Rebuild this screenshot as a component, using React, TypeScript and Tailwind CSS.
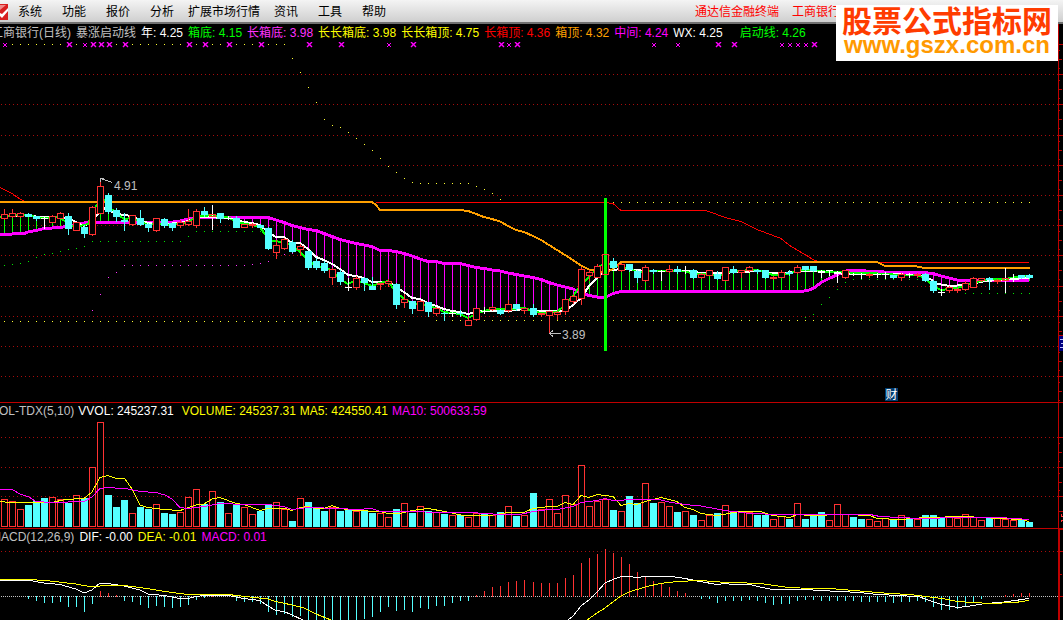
import React from 'react';

type Pt = [number, number];
type Candle = [string, number, number, number, number];

const PLOT_W = 1058;

// Bars sit eight pixels apart.
const barX = (i: number) => (i < 66 ? 4 : 5) + 8 * i;

const RED = '#ff3232';
const CYAN = '#54ffff';
const MAGENTA = '#ff00ff';

// kind, high, body top, body bottom, low
const candles: Candle[] = [
  ['r', 209, 214, 218, 219], ['r', 209, 213, 216, 217], ['r', 212, 213, 216, 217], ['c', 213, 214, 216, 216],
  ['c', 216, 216, 218, 220], ['w', 217, 218, 218, 228], ['r', 215, 216, 222, 222], ['r', 212, 213, 218, 218],
  ['c', 213, 216, 228, 234], ['r', 222, 222, 230, 230], ['c', 225, 227, 233, 237], ['r', 206, 207, 234, 235],
  ['r', 180, 186, 213, 213], ['c', 193, 195, 211, 213], ['c', 208, 210, 216, 221], ['c', 213, 220, 221, 230],
  ['r', 215, 215, 224, 225], ['c', 210, 218, 224, 225], ['c', 223, 224, 227, 231], ['r', 218, 218, 230, 231],
  ['c', 218, 219, 225, 227], ['c', 223, 223, 227, 230], ['r', 220, 222, 225, 227], ['r', 209, 221, 224, 225],
  ['r', 209, 211, 225, 227], ['c', 207, 211, 214, 216], ['x', 205, 214, 216, 229], ['c', 213, 213, 218, 222],
  ['w', 216, 218, 218, 219], ['c', 216, 218, 227, 227], ['r', 224, 224, 227, 227], ['r', 223, 224, 225, 227],
  ['c', 224, 225, 227, 227],
  ['c', 227, 228, 248, 249], ['r', 240, 245, 252, 258], ['r', 238, 239, 248, 249], ['c', 240, 242, 251, 252],
  ['r', 244, 246, 249, 255], ['c', 251, 251, 267, 269], ['c', 258, 261, 267, 269], ['c', 261, 263, 270, 272],
  ['r', 268, 269, 277, 284], ['c', 270, 272, 281, 284], ['w', 278, 287, 287, 290], ['r', 276, 278, 287, 289],
  ['c', 277, 278, 282, 290], ['c', 277, 286, 289, 289], ['r', 283, 283, 284, 289], ['r', 279, 281, 283, 286],
  ['c', 283, 284, 304, 308], ['r', 294, 299, 302, 307], ['c', 301, 301, 308, 313], ['r', 300, 301, 310, 310],
  ['c', 302, 302, 311, 316], ['r', 307, 308, 313, 315], ['c', 312, 313, 313, 320], ['w', 310, 313, 313, 316],
  ['c', 310, 313, 313, 316], ['r', 317, 320, 325, 325], ['r', 308, 308, 319, 320], ['w', 307, 311, 311, 313],
  ['r', 306, 307, 309, 310], ['c', 309, 310, 313, 314], ['r', 300, 304, 310, 312], ['c', 304, 304, 308, 310],
  ['r', 308, 308, 310, 313],
  ['c', 304, 308, 314, 316], ['r', 313, 313, 314, 316], ['r', 311, 311, 315, 333], ['r', 311, 312, 314, 319],
  ['r', 299, 299, 311, 314], ['r', 294, 296, 301, 303], ['r', 267, 269, 298, 304], ['r', 270, 272, 275, 280],
  ['r', 264, 266, 277, 277], ['r', 253, 254, 274, 275], ['c', 258, 261, 267, 268], ['r', 263, 264, 270, 271],
  ['c', 264, 264, 269, 271], ['c', 270, 271, 277, 282], ['r', 265, 267, 280, 281], ['c', 269, 270, 271, 273],
  ['w', 270, 271, 271, 280], ['r', 265, 269, 271, 272], ['c', 266, 269, 271, 273], ['w', 266, 270, 270, 273],
  ['c', 269, 270, 277, 278], ['r', 273, 274, 277, 278], ['r', 270, 270, 275, 275], ['c', 271, 274, 278, 279],
  ['r', 267, 267, 280, 280], ['c', 266, 269, 272, 273], ['r', 270, 270, 272, 277], ['r', 266, 267, 270, 271],
  ['c', 269, 270, 271, 273], ['c', 270, 270, 277, 278], ['r', 276, 277, 278, 279],
  ['r', 270, 272, 277, 277], ['c', 270, 272, 273, 275], ['r', 265, 267, 272, 273], ['c', 266, 266, 269, 270],
  ['c', 266, 266, 270, 271], ['w', 270, 271, 271, 277], ['w', 270, 270, 270, 275], ['w', 271, 272, 272, 282],
  ['r', 270, 270, 277, 278], ['w', 273, 274, 274, 275], ['w', 273, 274, 274, 278], ['r', 273, 274, 275, 277],
  ['w', 273, 274, 274, 277], ['w', 272, 274, 274, 278], ['c', 275, 275, 277, 278], ['r', 273, 274, 277, 280],
  ['w', 273, 274, 274, 277], ['r', 273, 274, 275, 277], ['c', 273, 274, 280, 281], ['c', 280, 281, 290, 292],
  ['w', 289, 292, 292, 295], ['r', 286, 287, 290, 292], ['r', 288, 289, 290, 292], ['r', 281, 283, 289, 290],
  ['r', 277, 278, 287, 287], ['r', 278, 278, 280, 281], ['c', 277, 278, 279, 289], ['r', 279, 280, 281, 283],
  ['x', 268, 278, 280, 292], ['w', 274, 278, 278, 281], ['c', 275, 275, 277, 278], ['c', 274, 275, 277, 278],
];

const volumes =
  'r499 r501 r509 c505 c501 c498 r497 r499 c503 r495 c498 r467 r422 c495 c507 c500 r513 c507 c509 r504 c513 c514 r512 r497 r489 c504 r491 c502 r513 c505 r507 r514 c511 c504 r502 r509 c521 r498 c502 c508 c511 r507 c511 c509 r511 c510 c513 r513 r517 c509 r503 c513 r506 c511 r512 c514 r515 c515 r517 r513 c514 r515 c512 r506 c516 r515 c493 r509 r499 r513 r495 r504 r465 r506 r501 r499 c510 r511 c496 c503 r483 c503 r502 r506 c512 r511 c515 r520 r515 c513 r505 c511 r512 r512 c515 c515 r519 r516 c519 r503 c519 c515 c512 r520 r504 r514 c517 c519 r519 r521 r518 c519 r515 c519 r519 c515 c515 c518 r516 r518 r514 r517 r520 c518 r518 r519 r520 c519 c522'.split(' ');

// End of each histogram bar; 596 is the zero line.
const macdBars = [
  596, 596, 596, 598, 600, 602, 602, 601, 606, 606, 611, 603, 591, 593, 595, 600, 601, 604, 607, 605, 606, 607, 606, 604, 599, 597, 595,
  596, 596, 600, 601, 601, 603, 611, 614, 613, 616, 615, 620, 620, 620, 620, 620, 620, 620, 618, 616, 611, 606, 610, 609, 611, 607, 608,
  605, 605, 602, 600, 600, 595, 591, 587, 586, 582, 581, 580, 582, 583, 583, 583, 578, 575, 563, 558, 554, 549, 553, 557, 564, 572, 576,
  581, 584, 587, 591, 593, 596, 598, 598, 602, 600, 600, 600, 599, 600, 602, 604, 603, 603, 600, 599, 599, 600, 600, 600, 600, 600, 601,
  601, 601, 601, 602, 601, 601, 600, 601, 606, 609, 609, 608, 605, 601, 598, 596, 596, 595, 594, 593, 593,
];

const parse = (s: string): Pt[] => s.split(' ').map((p) => p.split(',').map(Number) as Pt);

const boxTop = '0,202 372,202 376,205 380,210 460,210 468,211 476,214 484,217 492,219 500,221.5 508,226 516,230 524,232 533,236 541,240 549,245 557,250 565,255 573,260 581,265.5 589,269.5 597,271 605,273 613,269 621,262 877,262 885,266 914,266 925,268 1030,268';
const longTopA = '0,187.5 4,189.5 12,193.5 20,199 25,201.5';
const longTopB = '376,202.5 605,202.5 613,203.5 621,210.5 706,210.5 717,214.5 725,217.5 733,219.5 741,221.5 749,225.5 757,229.5 765,232.5 773,235.5 781,238.5 789,245 797,250 805,254.5 813,259.5 818,261.5';
const longBottom = '0,234.5 12,234 24,233.5 28,232 36,230.5 44,228.5 60,227.5 76,225 84,223 93,222.5 170,222.5 180,221 188,219 197,217.5 268,217.5 276,220 284,222.5 292,225.5 300,227.5 308,229.5 316,230.5 324,233.5 332,236.5 340,239.5 348,241.5 356,243.5 364,245 372,246.5 380,250.5 388,250.5 396,251.5 404,253.5 412,256 420,259 428,261.5 436,261.5 444,263.5 460,263.5 468,265.5 476,267.5 484,268.5 492,270 500,271 508,273 516,274.5 524,276 533,277.5 541,279.5 549,282.5 557,285 565,287 573,289 581,293 589,295.5 597,297 605,297.5 613,293.5 621,291.5 800,291.5 808,290.5 814,288 822,282 830,278 838,274.5 846,271 854,270.5 878,271.5 890,272.5 922,272.5 933,273.5 941,276 949,278 957,280 973,280.5 1029,280.5';
const wx = '0,217 12,216 28,215 36,216.5 44,217.5 60,217 68,218 76,222 84,226 92,221 100,212 105,208 110,211 116,213.5 124,215 132,216 140,220 148,223 156,224 164,224 180,223 188,221 196,218 204,217 228,218 236,220 244,222 252,223 260,225 268,232 276,237 284,237 292,243 300,243 308,249 316,257 324,260 332,264 340,269 348,275 356,276 364,278 372,282 390,282 396,287 404,292 412,298 420,299 428,303 436,306 444,309 452,311 460,312 468,314 476,312 484,311 508,311 524,309 533,310 541,311 565,311 573,305 581,298 589,286 597,278 605,271 613,270 621,269 637,270 645,271 690,271 700,273 720,273 740,272 760,271 770,273 785,273 797,271 805,271 830,272 845,274 885,274 920,275 930,279 938,284 950,286 965,285 975,283 985,281 1000,280 1010,279 1029,278';
const trend = '0,217 12,215 28,215 40,218 60,217 68,224 76,227 88,224 96,206 104,200 108,206 116,213 124,219 132,218 140,221 148,225 156,224 172,225 188,222 196,217 212,215 228,217 236,222 252,225 260,227 264,233 272,241 284,242 292,246 300,252 308,260 316,266 324,268 332,270 340,279 348,284 356,280 364,283 372,286 380,283 388,281 396,292 404,299 412,303 420,304 436,308 444,312 460,314 468,318 476,314 484,311 492,309 508,309 524,308 533,311 541,313 557,312 565,305 573,296 581,285 589,277 597,268 605,263 613,264 621,267 629,268 637,272 653,271 685,271 693,274 709,274 717,276 733,271 757,270 773,275 789,274 797,270 813,270 829,272 870,273 901,275 917,275 925,278 933,286 941,290 957,288 973,283 989,279 1005,279 1017,277 1029,276';

const ma5 = '0,501 8,502.5 50,503 65,499.5 84,498.5 92,492 100,477.5 108,475.5 116,478.5 125,479 132,489 140,505 148,507.5 164,509.5 180,510.5 196,505 204,504 212,499 220,497.5 236,503.5 244,504.5 260,510.5 268,508.5 285,508.5 292,510.5 300,507.5 308,506.5 316,508.5 324,508.5 332,505.5 340,508.5 356,510.5 380,511.5 388,513.5 400,513.5 412,510.5 428,508.5 445,511.5 463,515.5 490,515.5 508,512.5 524,512.5 533,508.5 549,506.5 557,506.5 565,502.5 573,504.5 581,495.5 589,497.5 597,494.5 613,496.5 621,505.5 629,503.5 637,504.5 645,501.5 661,497.5 677,501.5 685,507.5 693,509.5 701,513.5 717,515.5 740,511.5 760,511.5 773,515.5 790,517.5 797,514.5 810,515.5 845,514.5 870,515.5 877,518.5 900,519.5 925,517.5 965,516.5 1000,518.5 1022,519.5 1029,521.5';
const ma10 = '0,489.5 12,489.5 20,494 28,496.5 36,501.5 52,502.5 84,501.5 92,497 100,488.5 108,487.5 128,489 140,491.5 156,492.5 165,495 172,499 180,507.5 188,508.5 204,506.5 220,503.5 245,504.5 268,504.5 284,506.5 292,509.5 308,507.5 340,508.5 356,509.5 372,508.5 380,511.5 470,512.5 500,514.5 520,514.5 533,511.5 549,509.5 557,509.5 573,506.5 581,502.5 597,500.5 605,498.5 613,500.5 645,499 661,500 669,502 685,504.5 701,506 725,510.5 750,513.5 780,514.5 870,514.5 880,516.5 920,518.5 960,517.5 1000,517.5 1029,519.5';

const dif = ['0,580 30,580.5 44,583 60,584.5 76,589 84,593 92,590 100,583 108,583.5 124,586 140,590 148,594 164,595.5 180,598.5 188,598.5 196,596.5 204,595.5 228,595.5 244,598.5 260,600.5 268,606 276,610.5 284,611.5 292,615 303,620', '568,620 573,616 581,606 589,600 597,592 605,583 613,579.5 621,576.5 629,576.5 637,577.5 645,576.5 672,576.5 685,578.5 700,581.5 717,584.5 725,583.5 733,584.5 750,584.5 760,587 773,589.5 805,589.5 820,590.5 860,592.5 877,594.5 900,595.5 920,597 925,599 940,604 950,606 958,607.5 970,606 985,603.5 1000,602.5 1015,600.5 1029,598.5'];
const dea = ['0,579.5 30,579.5 50,581 76,584 92,587 100,586 124,585.5 140,587.5 156,590 172,592.5 188,594.5 204,595 228,594.5 250,597 268,599 276,601.5 292,605 304,608 316,614 331,620', '587,620 597,613 605,608 613,602 621,596 629,592 645,587 660,583.5 677,581.5 700,580.5 720,582 760,583.5 785,587 800,588 830,588.5 860,591 890,593.5 910,594.5 930,597 945,599 957,601.5 973,602.5 990,603.5 1015,602.5 1029,600.5'];

const range = (from: number, to: number, y: number): Pt[] => {
  const out: Pt[] = [];
  for (let i = 0; i < 129; i++) if (barX(i) >= from && barX(i) <= to) out.push([barX(i), y]);
  return out;
};

const yellowDots: Pt[] = [
  ...range(12, 284, 44), ...range(0, 404, 321), ...range(436, 1030, 320), ...range(613, 1030, 202), ...range(420, 468, 183),
  ...parse('292,58 300,72 308,87 316,102 324,119 332,125 340,127 348,132 356,138 364,144 372,150 380,158 388,166 396,172 404,178 412,182 476,186 484,189 492,193 500,199'),
];
const greenDots: Pt[] = [
  ...parse('4,265 12,264 20,263 28,261 36,257 44,254 52,253 60,251 68,249 76,248 84,246 188,236 805,317 813,314 821,304 829,297 837,289 845,282'),
  ...range(92, 180, 241), ...range(196, 260, 231), ...range(853, 917, 279), ...range(965, 1030, 293),
];
const pinkDots: Pt[] = [
  ...parse('92,310 100,294 108,277 116,272 252,264 260,263 268,261 284,254 292,253'), ...range(124, 244, 265),
];

const bigCrosses = [69, 93, 101, 109, 125, 189, 205, 229, 261, 309, 341, 413, 501, 517, 718, 734, 814];
const smallCrosses = [5, 85, 389, 509, 654, 678, 782, 790, 798, 806];

const yAt = (line: Pt[], x: number) => {
  const k = Math.max(1, line.findIndex((p) => p[0] >= x));
  const [x0, y0] = line[k - 1];
  const [x1, y1] = line[k];
  return y0 + ((y1 - y0) * (x - x0)) / (x1 - x0);
};

const Grid = ({ rows }: { rows: number[] }) => (
  <>
    {rows.map((y) => (
      <line key={y} x1={1} x2={PLOT_W} y1={y + 0.5} y2={y + 0.5} stroke="#a80c0c" strokeDasharray="1 3" />
    ))}
  </>
);

const Dots = ({ pts, color }: { pts: Pt[]; color: string }) => (
  <path d={pts.map(([x, y]) => `M${x} ${y}h1v1h-1z`).join('')} fill={color} />
);

const Line = ({ pts, color, width = 1 }: { pts: string; color: string; width?: number }) => (
  <polyline points={pts} fill="none" stroke={color} strokeWidth={width} />
);

const Plot = ({ top, height, label, children }: { top: number; height: number; label: string; children: React.ReactNode }) => (
  <svg
    role="img"
    aria-label={label}
    width={PLOT_W}
    height={height}
    viewBox={`0 ${top} ${PLOT_W} ${height}`}
    shapeRendering="crispEdges"
    className="block max-w-none shrink-0"
  >
    {children}
  </svg>
);

const Axis = ({ top, height, long, mid, small = [], children }: { top: number; height: number; long: number[]; mid: number[]; small?: number[]; children?: React.ReactNode }) => (
  <svg aria-hidden="true" width={5} height={height} viewBox={`0 ${top} 5 ${height}`} shapeRendering="crispEdges" className="block shrink-0 bg-black">
    <g fill="#c00000">
      <rect x={0} y={top} width={1} height={height} />
      {long.map((y) => <rect key={y} x={0} y={y} width={5} height={1} />)}
      {mid.map((y) => <rect key={y} x={0} y={y} width={4} height={1} />)}
      {small.map((y) => <rect key={y} x={0} y={y} width={2} height={1} />)}
    </g>
    {children}
  </svg>
);

function CandleShape({ i, c }: { i: number; c: Candle }) {
  const x = barX(i);
  const [kind, high, top, bottom, low] = c;
  const wick = (color: string) => <rect x={x} y={high} width={1} height={low - high + 1} fill={color} />;
  if (kind === 'w') {
    return <>{wick('#fff')}<rect x={x - 3} y={top} width={7} height={1} fill="#fff" /></>;
  }
  if (kind === 'c') {
    return <>{wick(CYAN)}<rect x={x - 3} y={top} width={7} height={bottom - top + 1} fill={CYAN} /></>;
  }
  return (
    <>
      {kind === 'x' ? (
        wick('#fff')
      ) : (
        <>
          <rect x={x} y={high} width={1} height={top - high} fill={RED} />
          <rect x={x} y={bottom} width={1} height={low - bottom + 1} fill={RED} />
        </>
      )}
      <rect x={x - 2.5} y={top + 0.5} width={6} height={Math.max(1, bottom - top)} fill={kind === 'x' ? 'none' : '#000'} stroke={RED} />
    </>
  );
}

function PricePlot() {
  const base = parse(longBottom);
  const green = parse(trend);
  const hatch: React.ReactNode[] = [];
  candles.forEach((_, i) => {
    const x = barX(i);
    const a = yAt(base, x);
    const b = yAt(green, x);
    if (x > 837 && x < 925) return;
    const y = Math.round(Math.min(a, b));
    hatch.push(<rect key={i} x={x} y={y} width={1} height={Math.round(Math.abs(a - b))} fill={b > a ? MAGENTA : '#00ff00'} />);
  });
  return (
    <Plot top={42} height={360} label="K线图">
      <Grid rows={[74, 104, 135, 165, 195, 225, 255, 286, 316, 346, 376]} />
      <Dots pts={yellowDots} color="#ffff32" />
      <Dots pts={greenDots} color="#00e600" />
      <Dots pts={pinkDots} color="#ff32ff" />
      <g stroke={MAGENTA} strokeWidth={1} shapeRendering="auto">
        {bigCrosses.map((x) => <path key={x} d={`M${x - 2} 42l5 5m0-5l-5 5`} strokeWidth={1.4} />)}
        {smallCrosses.map((x) => <path key={x} d={`M${x - 2} 43l4 4m0-4l-4 4`} />)}
      </g>
      {hatch}
      <Line pts={longTopA} color="#f00" />
      <Line pts={longTopB} color="#f00" />
      <Line pts="877,262.5 1029,262.5" color="#f00" />
      <Line pts={longBottom} color={MAGENTA} width={3} />
      <Line pts={wx} color="#fff" width={2} />
      <Line pts={trend} color="#00ff00" width={2} />
      <Line pts={boxTop} color="#ffa000" width={2} />
      {candles.map((c, i) => <CandleShape key={i} i={i} c={c} />)}
      <rect x={604} y={198} width={3} height={153} fill="#00ff00" />
      <rect x={602.5} y={254.5} width={6} height={20} fill="none" stroke={RED} />
      <g stroke="#c0c0c0" fill="none">
        <path d="M100.5 182v-3.5h3M101 178.5l11 4" />
        <path d="M550 333.500h11M553 330.500l-3.500 3l3.500 3" />
      </g>
      <g fill="#c0c0c0" fontSize={12} className="font-['Liberation_Sans',sans-serif]">
        <text x={114} y={190}>4.91</text>
        <text x={562} y={339}>3.89</text>
      </g>
    </Plot>
  );
}

function VolumePlot() {
  return (
    <Plot top={419} height={109} label="成交量">
      <Grid rows={[437, 467, 496]} />
      {volumes.map((v, i) => {
        const top = Number(v.slice(1));
        return v[0] === 'c' ? (
          <rect key={i} x={barX(i) - 3} y={top} width={7} height={527 - top} fill={CYAN} />
        ) : (
          <rect key={i} x={barX(i) - 2.5} y={top + 0.5} width={6} height={526 - top} fill="#000" stroke={RED} />
        );
      })}
      <Line pts={ma5} color="#ffff00" />
      <Line pts={ma10} color={MAGENTA} />
    </Plot>
  );
}

function MacdPlot() {
  return (
    <Plot top={545} height={75} label="MACD">
      <Grid rows={[551]} />
      <line x1={1} x2={PLOT_W} y1={596.5} y2={596.5} stroke="#c0c0c0" strokeDasharray="1 1" />
      {macdBars.map((v, i) =>
        v === 596 ? null : (
          <rect key={i} x={barX(i)} y={Math.min(v, 596)} width={1} height={Math.abs(v - 596) + 1} fill={v > 596 ? CYAN : RED} />
        ),
      )}
      {dif.map((p) => <Line key={p} pts={p} color="#fff" />)}
      {dea.map((p) => <Line key={p} pts={p} color="#ffff00" />)}
    </Plot>
  );
}

const menu = [
  ['系统', 'w-11'], ['功能', 'w-11'], ['报价', 'w-11'], ['分析', 'w-11'],
  ['扩展市场行情', 'w-20'], ['资讯', 'w-11'], ['工具', 'w-11'], ['帮助', 'w-11'],
];

const priceLegend = [
  ['工商银行(日线)', 'text-[#c0c0c0]'],
  ['暴涨启动线', 'text-[#c0c0c0]'],
  ['年: 4.25', 'text-white'],
  ['箱底: 4.15', 'text-[#00ff00]'],
  ['长箱底: 3.98', 'text-[#ff32ff]'],
  ['长长箱底: 3.98', 'text-[#ffff00]'],
  ['长长箱顶: 4.75', 'text-[#ffff00]'],
  ['长箱顶: 4.36', 'text-[#ff0000]'],
  ['箱顶: 4.32', 'text-[#ffa000]'],
  ['中间: 4.24', 'text-[#ff00ff]'],
  ['WX: 4.25', 'text-white'],
  ['启动线: 4.26', 'text-[#00ff00] ml-3'],
];
const volumeLegend = [
  ['VOL-TDX(5,10)', 'text-[#c0c0c0]'],
  ['VVOL: 245237.31', 'text-white'],
  ['VOLUME: 245237.31', 'text-[#ffff00] ml-1'],
  ['MA5: 424550.41', 'text-[#ffff00]'],
  ['MA10: 500633.59', 'text-[#ff00ff]'],
];
const macdLegend = [
  ['MACD(12,26,9)', 'text-[#c0c0c0]'],
  ['DIF: -0.00', 'text-white'],
  ['DEA: -0.01', 'text-[#ffff00]'],
  ['MACD: 0.01', 'text-[#ff00ff]'],
];

const Legend = ({ items, className }: { items: string[][]; className: string }) => (
  <div className={`flex items-center ${className}`}>
    {items.map(([text, cls]) => <span key={text} className={cls}>{text}</span>)}
  </div>
);

const ticks = [44, 74, 104, 135, 165, 195, 225, 255, 286, 316, 346, 376];

export default function App() {
  return (
    <div className="relative flex min-h-screen flex-col overflow-hidden whitespace-nowrap bg-black font-['Liberation_Sans','Noto_Sans_CJK_SC',sans-serif] text-[12px] leading-4">
      <header className="flex h-6 items-center border-b-2 border-[#707070] bg-linear-to-b from-[#f4f4f4] to-[#cfcfcf] pt-px text-black">
        <svg aria-hidden="true" width="8" height="16" viewBox="0 0 8 16" className="block shrink-0">
          <path d="M0 0h8v16H0z" fill="#d81e1e" />
          <path d="M0 1h6L0 6z" fill="#f08a8a" />
          <path d="M0 9l2 1 6-6v3l-6 7-2-2z" fill="#fff" />
        </svg>
        <nav className="flex">
          {menu.map(([name, width]) => (
            <button key={name} type="button" className={`${width} text-center`}>{name}</button>
          ))}
        </nav>
        <div className="mr-[223px] ml-auto flex gap-[13px] text-[#ff0000]">
          <span>通达信金融终端</span>
          <span>工商银行</span>
        </div>
      </header>

      <main className="flex flex-1 flex-col">
        <section className="flex border-b border-[#c00000]">
          <div className="relative min-w-0 flex-1 overflow-hidden">
            <Legend items={priceLegend} className="-ml-[9px] h-[18px] gap-[5px]" />
            <PricePlot />
            <span className="absolute bottom-px left-[885px] flex size-[13px] items-center justify-center bg-[#003c70] text-white">财</span>
          </div>
          <Axis top={24} height={378} long={ticks} mid={ticks.map((y) => y + 15)} small={ticks.flatMap((y) => [y + 6, y + 24])}>
            <rect x={1} y={335} width={4} height={16} fill="#000080" />
            <rect x={1} y={335} width={4} height={1} fill="#c00000" />
            <path d="M2 339.500h3M5 343.500h-2M2 347.500h3" stroke="#c0c0ff" fill="none" />
          </Axis>
        </section>

        <section className="flex border-b border-[#c00000]">
          <div className="min-w-0 flex-1 overflow-hidden">
            <Legend items={volumeLegend} className="-ml-[9px] h-4 gap-1" />
            <VolumePlot />
          </div>
          <Axis top={403} height={125} long={[437, 467, 496, 511]} mid={[452, 482]} small={[443, 461, 473, 490]}>
            <path d="M3 514v2h2M3 522v-2h2" stroke="#ff3232" fill="none" />
          </Axis>
        </section>

        <section className="flex flex-1">
          <div className="min-w-0 flex-1 overflow-hidden">
            <Legend items={macdLegend} className="-ml-[9px] h-4 gap-[5px]" />
            <MacdPlot />
          </div>
          <Axis top={529} height={91} long={[529, 551, 596]} mid={[574]}>
            <rect x={0} y={529} width={2} height={91} fill="#c00000" />
          </Axis>
        </section>
      </main>

      <a href="#" className="absolute top-[5px] right-[5px] flex h-14 w-[222px] flex-col items-center bg-white pt-0.5 font-bold">
        <span className="text-[30px] leading-[30px] text-[#ff3c00]">股票公式指标网</span>
        <span className="text-[24px] leading-4 text-[#ff9900]">www.gszx.com.cn</span>
      </a>
    </div>
  );
}
